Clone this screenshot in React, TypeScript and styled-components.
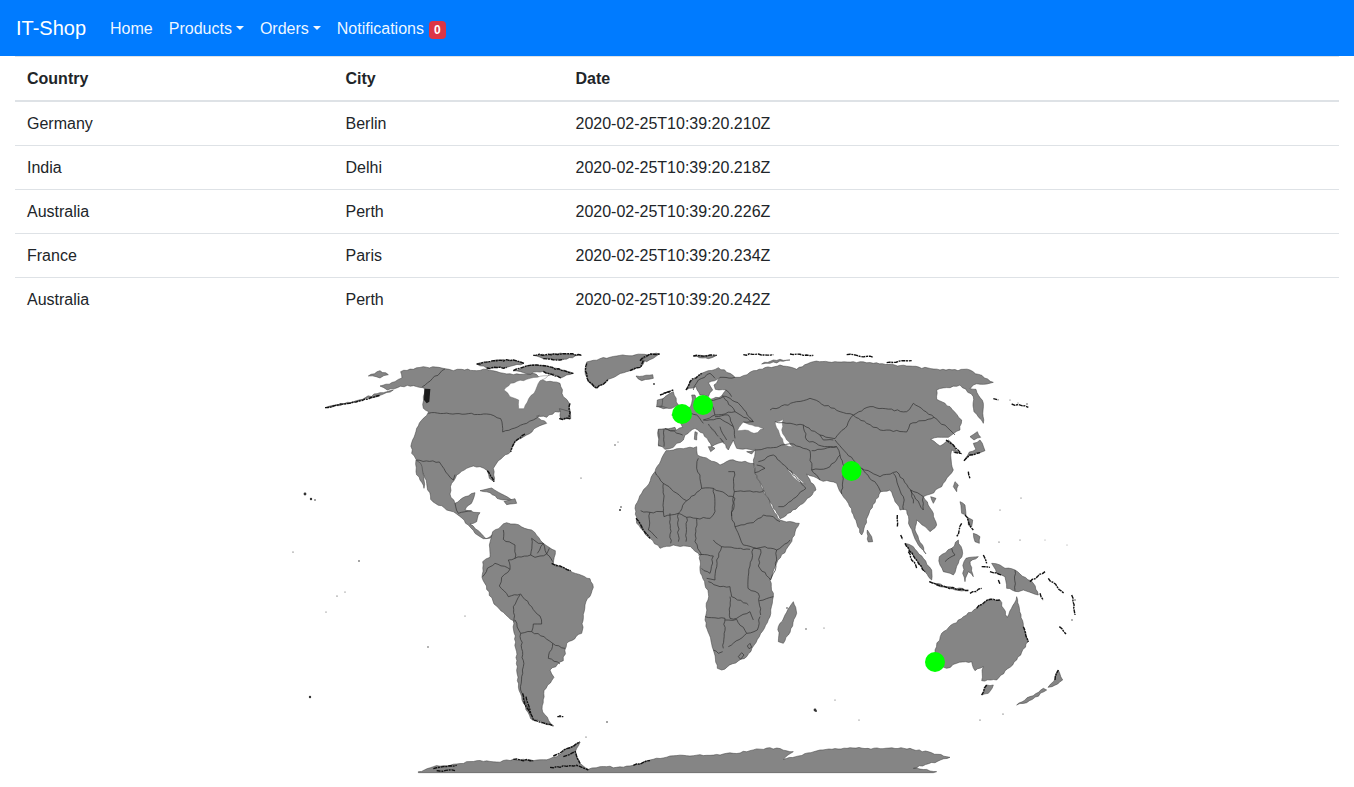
import styled, { createGlobalStyle } from "styled-components";

const GlobalStyle = createGlobalStyle`
  html, body {
    margin: 0;
    background: #fff;
    font-family: "Liberation Sans", Arial, sans-serif;
    font-size: 16px;
    color: #212529;
  }
`;

const Navbar = styled.nav`
  height: 56px;
  box-sizing: border-box;
  padding: 0 16px;
  background-color: #007bff;
  display: flex;
  align-items: center;
`;

const Brand = styled.a`
  font-size: 20px;
  color: #fff;
  margin-right: 16px;
`;

const NavItem = styled.a`
  padding: 1px 8px 0;
  color: rgba(255, 255, 255, 0.95);
  display: flex;
  align-items: center;
  white-space: nowrap;
`;

const Caret = styled.span`
  width: 0;
  height: 0;
  margin-left: 4px;
  margin-top: -1px;
  border-top: 4.8px solid currentColor;
  border-left: 4.8px solid transparent;
  border-right: 4.8px solid transparent;
`;

const Badge = styled.span`
  margin-left: 5px;
  margin-top: 2px;
  padding: 3px 5px;
  border-radius: 4px;
  background-color: #dc3545;
  color: #fff;
  font-size: 12px;
  font-weight: 700;
  line-height: 12px;
`;

const TableWrap = styled.div`
  padding: 0 15px;
`;

const Table = styled.table`
  width: 100%;
  border-collapse: collapse;
  table-layout: fixed;
`;

const HeadCell = styled.th<{ $width?: number }>`
  box-sizing: border-box;
  width: ${(p) => (p.$width ? `${p.$width}px` : "auto")};
  padding: 12px;
  border-top: 1px solid #dee2e6;
  border-bottom: 2px solid #dee2e6;
  text-align: left;
  font-weight: 700;
  line-height: 19px;
`;

const Cell = styled.td`
  padding: 12px;
  border-top: 1px solid #dee2e6;
  line-height: 19px;
`;

const FirstRow = styled.tr`
  td {
    border-top: 0;
  }
`;

const MapWrap = styled.div`
  display: flex;
  justify-content: center;
`;

const MapSvg = styled.svg`
  display: block;
  width: 800px;
  height: 465px;
`;

const Land = styled.path`
  fill: #858585;
  stroke: #3a3a3a;
  stroke-width: 0.5;
  stroke-linejoin: round;
  vector-effect: non-scaling-stroke;
`;

const Water = styled.path`
  fill: #fff;
  stroke: #555;
  stroke-width: 0.4;
  vector-effect: non-scaling-stroke;
`;

const Border = styled.path`
  fill: none;
  stroke: #303030;
  stroke-width: 0.7;
  stroke-linejoin: round;
  vector-effect: non-scaling-stroke;
`;

// broken dark coastline, where the map has many tiny islands
const Jag = styled.path`
  fill: none;
  stroke: #111;
  stroke-width: 1.4;
  stroke-dasharray: 4 0.7 2 0.8;
  vector-effect: non-scaling-stroke;
`;

const Dark = styled.path`
  fill: #1c1c1c;
`;

const Speck = styled.circle`
  fill: #333;
`;

const Marker = styled.circle`
  fill: #00ff00;
`;

// the map is traced as coarse polygons; this gives their edges a coastline wobble
const roughen = (d: string): string => {
  const closed = d.endsWith("Z");
  const nums = d.replace(/[MZ]/g, "").trim().split(/\s+/).map(Number);
  const pts: [number, number][] = [];
  for (let i = 0; i < nums.length; i += 2) pts.push([nums[i], nums[i + 1]]);
  if (closed) pts.push(pts[0]);
  let seed = Math.abs(nums[0] * 31 + nums[1] * 17 + nums.length) + 7;
  const noise = () => {
    seed = (seed * 16807) % 2147483647;
    return (seed % 1000) / 500 - 1;
  };
  const out: string[] = [`${pts[0][0]} ${pts[0][1]}`];
  for (let i = 1; i < pts.length; i++) {
    const [ax, ay] = pts[i - 1];
    const [bx, by] = pts[i];
    const len = Math.hypot(bx - ax, by - ay);
    const steps = Math.floor(len / 9);
    for (let s = 1; s < steps; s++) {
      const t = s / steps;
      const n = noise() * 2.6;
      const x = ax + (bx - ax) * t + (-(by - ay) / len) * n;
      const y = ay + (by - ay) * t + ((bx - ax) / len) * n;
      out.push(`${x.toFixed(1)} ${y.toFixed(1)}`);
    }
    out.push(`${bx} ${by}`);
  }
  return `M${out.join(" ")}${closed ? "Z" : ""}`;
};

const americasLand = [
  "M300 138 345 125 366 114 362 95 400 88 430 80 495 86 520 92 545 88 590 92 620 88 660 98 700 104 760 100 800 125 840 130 850 170 868 190 872 236 838 236 858 212 825 215 800 232 770 228 800 250 770 262 740 285 705 305 692 335 655 362 640 385 642 425 628 415 622 392 600 380 580 378 560 385 530 405 515 430 510 462 525 490 555 470 585 458 578 482 555 510 600 518 590 545 570 552 595 572 618 596 640 580 632 594 610 596 585 580 565 555 530 522 500 510 452 478 440 430 415 372 408 358 395 340 395 308 410 265 430 235 446 215 430 205 430 170 436 146 382 136 322 150Z",
  "M408 360 422 370 432 420 432 445 420 420 408 395Z",
  "M135 203 200 191 300 166 340 150 300 158 230 182 150 201Z",
  "M265 108 300 92 325 104 300 114Z",
  "M920 66 960 56 1010 48 1140 42 1095 60 1082 82 1040 95 985 118 950 145 925 125 915 92Z",
  "M1068 108 1118 104 1120 115 1085 122Z",
  "M600 452 635 444 665 462 700 482 660 478 630 458Z",
  "M672 484 705 476 710 490 680 494Z",
  "M1135 268 1185 262 1200 285 1168 320 1135 318Z",
  "M590 72 640 62 700 60 732 70 680 82 620 84Z",
  "M760 46 850 41 905 46 850 58 790 56Z",
  "M700 92 750 76 800 78 880 100 842 114 790 94 742 102Z",
  "M838 206 868 214 872 236 842 236Z",
  "M1135 200 1145 180 1165 170 1172 200 1150 206Z",
].map(roughen);

const americasJag = [
  "M590 72 640 62 700 60 732 70",
  "M620 84 680 82",
  "M760 46 850 41 905 46",
  "M790 56 850 58",
  "M700 92 750 76 800 78 880 100",
  "M790 94 842 114",
  "M920 70 916 92 926 125 950 145 985 118",
  "M1090 62 1082 82 1050 92",
  "M870 190 868 236 838 236",
  "M735 282 705 305 692 335",
  "M622 392 642 425",
  "M135 203 200 191 300 166",
  "M1150 160 1170 155",
].map(roughen);

const hudsonBay = roughen(
  "M672 150 692 130 740 118 772 112 822 100 780 122 762 160 746 176 732 206 716 206 716 180 690 170Z",
);

const americaBorders = [
  "M495 87 427 140",
  "M445 220 620 222 662 236 668 276 740 250 778 226",
  "M410 360 478 366 492 386 520 420 525 404",
  "M525 490 535 520 575 512",
].map(roughen);

const southAmericaLand = roughen(
  "M320 128 278 155 268 195 270 232 248 245 246 292 282 372 340 422 352 560 352 602 366 660 392 716 460 738 428 696 432 632 462 592 450 570 490 542 500 490 545 460 555 375 580 322 570 296 510 272 460 252 466 212 430 190 395 150 345 132Z",
);

const southAmericaBorders = [
  "M310 150 310 178 345 195 345 235 325 240 330 268 305 292 298 318 325 350 362 342 395 380 420 408 425 432 400 432 395 455 362 460 345 420",
  "M248 290 262 265 285 250 330 268",
  "M360 345 340 380 342 425",
  "M395 175 392 225 345 235",
  "M395 175 415 190 430 190 440 222 420 228 405 232 392 225",
  "M430 190 412 220",
  "M448 205 440 222 458 245",
  "M362 460 370 560 362 630 390 700",
  "M395 455 432 470 458 490 445 535",
  "M458 490 495 505",
  "M445 535 480 552",
].map(roughen);

const southAmericaJag = [
  "M455 250 480 258 512 272",
  "M368 640 378 680 400 720 460 738",
  "M378 650 392 700",
  "M472 710 490 710",
].map(roughen);

const africaLand = roughen(
  "M798 -88 820 -90 890 -100 892 -75 910 -68 960 -45 990 -60 1062 -50 1065 -22 1090 30 1120 90 1140 120 1198 130 1170 192 1130 250 1110 300 1120 350 1110 410 1078 470 1040 530 965 570 952 565 940 510 915 420 925 340 900 270 900 225 872 200 820 195 780 205 750 175 710 130 705 85 725 40 740 20 765 -25 790 -75Z",
);

const africaBorders = [
  "M790 10 790 95 750 97 722 92",
  "M790 10 860 62 835 100 792 110 790 95",
  "M765 -25 790 10",
  "M860 62 905 25 940 25 945 95 930 115 890 115 860 112 835 100",
  "M940 25 1005 55 995 108 1005 140 1030 195 1070 205 1095 200",
  "M905 25 900 -15 890 -35 895 -65",
  "M985 -25 1003 -25 1003 35 1088 35 1090 30",
  "M1003 35 1000 50 995 108",
  "M1005 140 1060 128 1090 105 1120 110 1140 125",
  "M1095 200 1130 210 1170 180",
  "M1130 210 1128 260 1112 300 1075 258 1082 208",
  "M1082 208 1060 205 1050 258 1044 300 1044 325",
  "M940 180 965 200 1050 208",
  "M965 200 950 240 945 300 920 295",
  "M895 225 940 228 930 280 905 265",
  "M890 115 885 185 905 225",
  "M835 100 835 185",
  "M810 100 812 190",
  "M860 112 858 185",
  "M750 97 745 150 772 175",
  "M925 305 960 320 990 320 995 350 1040 370 1045 375",
  "M990 350 990 415 1010 415 1050 395 1060 420",
  "M915 410 975 415 970 505",
  "M1044 325 1075 340 1082 405",
  "M1120 350 1078 362",
  "M975 420 1010 418 1040 460 985 500",
  "M1040 460 1072 450 1080 410",
  "M940 510 955 520 968 515",
  "M1015 530 1025 518 1032 525 1022 538Z",
  "M1042 498 1050 490 1055 502 1047 506Z",
].map(roughen);

const madagascar = roughen("M1180 365 1190 400 1165 465 1150 490 1135 485 1135 440 1155 405Z");

// the top edge wobbles, the bottom edge is the straight cut of the projection
const antarcticaLand = `${roughen(
  "M55 875 100 860 170 852 230 842 290 846 340 838 400 842 450 836 470 830 500 806 540 786 526 815 540 850 565 868 600 860 650 862 700 856 750 840 810 828 850 826 920 826 1000 820 1050 812 1110 803 1180 815 1150 838 1260 810 1350 803 1440 806 1530 805 1650 832 1540 865 1610 875",
)} 1600 878 55 878Z`;

const antarcticaJag = [
  "M100 866 170 856",
  "M110 872 165 872",
  "M340 838 400 842",
  "M460 828 500 806 540 786",
  "M490 830 526 815 540 850",
  "M450 862 530 856 565 870",
  "M700 856 750 842",
].map(roughen);

const eurasiaLand = roughen(
  "M55 268 110 270 128 262 118 240 95 225 140 215 155 190 155 165 165 165 170 182 210 178 245 168 258 150 226 148 222 135 240 112 205 128 218 150 205 170 180 165 168 140 138 150 150 125 185 100 235 83 270 100 285 112 300 112 340 92 420 75 470 88 520 65 640 65 700 70 800 78 900 90 990 90 1060 127 1000 135 990 146 1008 148 1030 190 1030 250 1002 215 1000 170 960 135 890 150 890 178 930 200 965 240 960 270 925 292 905 292 872 298 900 318 925 300 960 340 935 330 932 345 940 390 905 440 872 462 850 470 880 520 890 555 870 575 830 540 825 570 858 642 835 615 810 560 800 510 780 510 750 450 722 455 690 510 665 585 625 490 605 462 590 430 540 420 500 402 528 450 490 490 420 536 400 505 345 400 345 385 340 360 346 328 290 325 280 300 265 330 240 292 205 252 250 305 235 310 215 320 190 280 165 265 135 285 130 300 110 310 100 322 75 328 55 315Z",
);

const eurasiaWater = [
  "M292 272 310 246 372 266 342 280 315 270Z",
  "M405 245 430 238 425 270 440 300 460 320 435 315 418 280Z",
  "M440 385 470 408 496 432 470 420Z",
].map(roughen);

const eurasiaBorders = [
  "M390 210 470 185 510 175 600 215 640 225 615 265 585 296 540 285 490 255 440 250 405 245",
  "M640 225 690 200 800 215 820 190 882 232 810 252 800 276 720 270 680 250 640 225",
  "M882 232 930 270 945 285",
  "M585 300 620 340 665 385 720 410 770 395 812 450 850 470",
  "M425 315 460 312 510 332 515 390 540 420",
  "M515 332 590 320 600 345 570 380 540 388 515 390",
  "M490 255 500 300 545 318 590 320",
  "M540 285 550 300 580 300",
  "M345 330 410 322 425 315",
  "M355 365 400 345 440 382 498 445 430 500 415 500",
  "M350 375 375 385 345 398",
  "M600 345 612 380 605 462",
  "M665 385 715 440 722 455",
  "M760 400 790 470 790 510",
  "M812 450 850 510 850 470",
  "M812 450 820 490",
  "M140 215 170 225 190 250",
  "M75 265 128 285",
  "M72 268 72 320",
  "M170 190 210 182 225 225 190 240",
  "M225 225 285 215 340 245 310 246",
  "M210 182 250 170 285 215",
  "M245 168 270 175 300 195 340 245",
  "M190 240 240 235 280 260 285 295",
  "M225 230 265 225 280 260",
  "M240 260 260 300",
  "M160 150 175 120 210 100",
  "M210 100 225 115",
  "M240 112 285 112",
  "M258 150 275 170",
].map(roughen);

const eurasiaIslands = [
  "M50 200 75 170 100 155 115 195 95 205Z",
  "M52 180 68 176 66 198 50 200Z",
  "M205 320 225 325 212 335Z",
  "M165 275 172 278 170 300 163 298Z",
  "M320 335 345 330 335 342Z",
  "M682 570 695 590 698 605 685 606Z",
  "M0 62 30 42 58 42 20 65Z",
  "M160 48 230 46 205 56Z",
  "M365 72 400 60 450 60 390 70Z",
].map(roughen);

const eurasiaJag = [
  "M138 150 150 125 185 100",
  "M60 165 100 150",
  "M0 62 30 42 58 42",
  "M160 48 230 46",
  "M310 44 400 44",
  "M450 42 520 46",
  "M620 44 700 52",
  "M740 68 815 62",
  "M1115 192 1165 202",
  "M1060 176 1075 180",
].map(roughen);

// south east asia, japan and new guinea
const asiaPacificLand = [
  "M45 340 70 350 100 385 125 420 125 450 105 425 75 385Z",
  "M118 455 170 470 235 480 215 483 150 470Z",
  "M148 380 185 355 205 330 218 370 205 400 190 435 160 425 150 405Z",
  "M228 385 265 380 240 395 250 440 235 425 225 455 218 430 222 395Z",
  "M210 215 225 225 228 255 215 250Z",
  "M250 310 270 320 268 340 255 335Z",
  "M232 262 248 270 245 290 235 285Z",
  "M305 400 330 405 345 415 375 420 430 460 445 495 400 480 385 485 350 475 345 440 320 430Z",
  "M195 155 205 165 200 185 190 170Z",
  "M122 200 138 205 130 220Z",
  "M222 92 240 75 270 68 285 62 270 30 250 40 258 58 238 66Z",
  "M240 20 262 5 272 22 252 30Z",
].map(roughen);

const asiaPacificJag = [
  "M45 340 75 385 105 425",
  "M22 255 22 290",
  "M32 315 38 328",
  "M55 365 80 415",
  "M118 455 170 472 235 482",
  "M240 490 275 475",
  "M420 455 465 425",
  "M475 445 522 490",
  "M450 490 460 510",
  "M545 495 555 555",
  "M222 92 240 75 270 68",
  "M235 125 240 145",
  "M168 30 190 45 212 70 190 66",
  "M225 255 250 300",
  "M215 280 200 320",
  "M280 375 290 400",
  "M300 425 335 435",
  "M275 410 300 412",
  "M325 450 330 462",
].map(roughen);

const asiaPacificBorders = ["M375 420 375 482", "M185 355 195 375 165 395"].map(roughen);

const oceaniaLand = [
  "M405 390 425 340 490 290 530 265 562 240 600 240 622 292 650 230 670 320 685 365 650 420 590 480 545 482 550 440 525 452 515 425 470 430 440 445 410 430Z",
  "M545 525 560 495 580 495 565 520Z",
  "M650 555 730 505 740 510 680 548Z",
  "M744 502 760 485 775 450 788 480 756 500Z",
].map(roughen);

const oceaniaJag = [
  "M530 265 562 240 600 240",
  "M670 320 685 365",
  "M778 320 798 342",
  "M545 525 560 495",
  "M765 480 775 450",
].map(roughen);

const specks: [number, number, number][] = [
  [305, 494, 1.4], [311, 499, 1.2], [315, 500, 0.8], [310, 697, 1.2], [293, 552, 0.6],
  [337, 596, 0.6], [326, 612, 0.5], [345, 592, 0.5], [359, 561, 0.8], [620, 510, 1],
  [621, 507, 0.8], [615, 445, 0.7], [618, 442, 0.5], [815, 710, 1.4], [816, 711, 1],
  [560, 716, 1], [607, 722, 0.8], [586, 737, 0.6], [787, 608, 0.8], [806, 629, 0.7],
  [824, 628, 0.5], [835, 700, 0.5], [1027, 404, 0.7], [1010, 400, 0.5], [1018, 403, 0.5],
  [654, 384, 0.9], [581, 478, 0.6], [1075, 600, 0.7], [1072, 620, 0.7], [980, 720, 0.6],
  [1003, 714, 0.6], [859, 720, 0.5], [428, 647, 0.7], [465, 616, 0.5], [1000, 510, 0.5],
  [1021, 498, 0.5], [1020, 540, 0.5], [999, 542, 0.6], [1045, 540, 0.4], [1067, 545, 0.4],
];

const App = () => (
  <>
    <GlobalStyle />
    <Navbar>
      <Brand>IT-Shop</Brand>
      <NavItem>Home</NavItem>
      <NavItem>
        Products
        <Caret />
      </NavItem>
      <NavItem>
        Orders
        <Caret />
      </NavItem>
      <NavItem>
        Notifications
        <Badge>0</Badge>
      </NavItem>
    </Navbar>
    <TableWrap>
      <Table>
        <thead>
          <tr>
            <HeadCell $width={318.5}>Country</HeadCell>
            <HeadCell $width={230}>City</HeadCell>
            <HeadCell>Date</HeadCell>
          </tr>
        </thead>
        <tbody>
          <FirstRow>
            <Cell>Germany</Cell>
            <Cell>Berlin</Cell>
            <Cell>2020-02-25T10:39:20.210Z</Cell>
          </FirstRow>
          <tr>
            <Cell>India</Cell>
            <Cell>Delhi</Cell>
            <Cell>2020-02-25T10:39:20.218Z</Cell>
          </tr>
          <tr>
            <Cell>Australia</Cell>
            <Cell>Perth</Cell>
            <Cell>2020-02-25T10:39:20.226Z</Cell>
          </tr>
          <tr>
            <Cell>France</Cell>
            <Cell>Paris</Cell>
            <Cell>2020-02-25T10:39:20.234Z</Cell>
          </tr>
          <tr>
            <Cell>Australia</Cell>
            <Cell>Perth</Cell>
            <Cell>2020-02-25T10:39:20.242Z</Cell>
          </tr>
        </tbody>
      </Table>
    </TableWrap>
    <MapWrap>
      <MapSvg viewBox="277 321 800 465">
        <g transform="translate(280 340) scale(0.33333)">
          {americasLand.map((d) => (
            <Land key={d} d={d} />
          ))}
          <Water d={hudsonBay} />
          {americaBorders.map((d) => (
            <Border key={d} d={d} />
          ))}
          {americasJag.map((d) => (
            <Jag key={d} d={d} />
          ))}
          <Dark d="M433 146 451 147 448 185 440 190 432 180Z" />
        </g>
        <g transform="translate(400 480) scale(0.33333)">
          <Land d={southAmericaLand} />
          {southAmericaBorders.map((d) => (
            <Border key={d} d={d} />
          ))}
          {southAmericaJag.map((d) => (
            <Jag key={d} d={d} />
          ))}
          <Land d={africaLand} />
          {africaBorders.map((d) => (
            <Border key={d} d={d} />
          ))}
          <Jag d={roughen("M708 115 725 140 750 175")} />
          <Land d={madagascar} />
          <Land d={antarcticaLand} />
          {antarcticaJag.map((d) => (
            <Jag key={d} d={d} />
          ))}
        </g>
        <g transform="translate(640 340) scale(0.33333)">
          <Land d={eurasiaLand} />
          {eurasiaWater.map((d) => (
            <Water key={d} d={d} />
          ))}
          {eurasiaBorders.map((d) => (
            <Border key={d} d={d} />
          ))}
          {eurasiaIslands.map((d) => (
            <Land key={d} d={d} />
          ))}
          {eurasiaJag.map((d) => (
            <Jag key={d} d={d} />
          ))}
        </g>
        <g transform="translate(890 430) scale(0.33333)">
          {asiaPacificLand.map((d) => (
            <Land key={d} d={d} />
          ))}
          {asiaPacificBorders.map((d) => (
            <Border key={d} d={d} />
          ))}
          {asiaPacificJag.map((d) => (
            <Jag key={d} d={d} />
          ))}
        </g>
        <g transform="translate(800 520) scale(0.33333)">
          {oceaniaLand.map((d) => (
            <Land key={d} d={d} />
          ))}
          {oceaniaJag.map((d) => (
            <Jag key={d} d={d} />
          ))}
        </g>
        {specks.map(([x, y, r]) => (
          <Speck key={`${x}-${y}`} cx={x} cy={y} r={r} />
        ))}
        <Marker cx={703} cy={405} r={10} />
        <Marker cx={682} cy={414} r={10} />
        <Marker cx={851.5} cy={471} r={10} />
        <Marker cx={935} cy={662} r={10} />
      </MapSvg>
    </MapWrap>
  </>
);

export default App;
